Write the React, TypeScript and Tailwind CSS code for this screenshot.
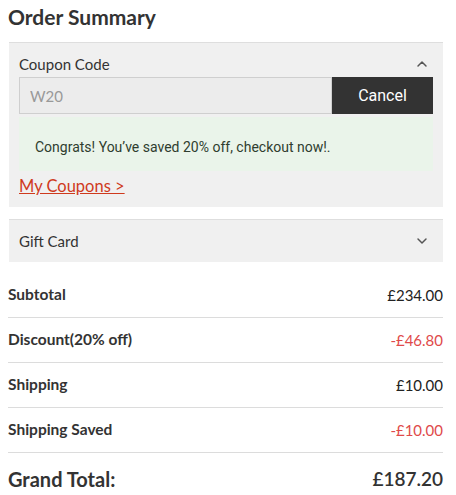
import { ChevronDown, ChevronUp } from "lucide-react";

const rows = [
  { label: "Subtotal", value: "£234.00", red: false },
  { label: "Discount(20% off)", value: "-£46.80", red: true },
  { label: "Shipping", value: "£10.00", red: false },
  { label: "Shipping Saved", value: "-£10.00", red: true },
];

export default function App() {
  return (
    <div className="w-[456px] bg-white px-2 font-['Lato','Noto_Sans',sans-serif] text-[#333]">
      <h2 className="pt-[3px] pb-[11px] text-[21px] leading-[28px] font-bold text-[#333]">
        Order Summary
      </h2>

      {/* Coupon */}
      <div className="mr-[5px] ml-[1px] border-t border-[#dedede] bg-[#f0f0f0] px-[10px] pb-[11px]">
        <div className="flex items-center justify-between pt-[11px] pr-[3px]">
          <span className="text-[15px] leading-[20px]">Coupon Code</span>
          <ChevronUp size={16} strokeWidth={2.2} className="text-[#555]" />
        </div>
        <div className="mt-[3px] flex h-[37px]">
          <input
            readOnly
            value="W20"
            className="h-full flex-1 border border-[#cfcfcf] bg-[#ececec] px-[10px] text-[15px] text-[#999] outline-none"
          />
          <button className="h-full w-[101px] bg-[#333] font-['Roboto',sans-serif] text-[16px] text-white">
            Cancel
          </button>
        </div>
        <div className="mt-[3px] h-[54px] bg-[#eaf4ea] pl-[16px] pt-[20px] font-['Roboto',sans-serif] text-[14px] leading-[20px] text-[#2f3d2f]">
          Congrats! You’ve saved 20% off, checkout now!.
        </div>
        <a className="mt-[5px] block text-[16.5px] leading-[20px] text-[#cf3a1d] underline">
          My Coupons &gt;
        </a>
      </div>

      {/* Gift card */}
      <div className="mt-[12px] mr-[5px] ml-[1px] flex h-[43px] items-center justify-between border-t border-[#dedede] bg-[#f0f0f0] px-[10px] pr-[13px]">
        <span className="text-[15px]">Gift Card</span>
        <ChevronDown size={16} strokeWidth={2.2} className="text-[#555]" />
      </div>

      {/* Totals */}
      <div className="mt-[11px] mr-[5px]">
        {rows.map((r) => (
          <div
            key={r.label}
            className="flex h-[45px] items-center justify-between border-b border-[#dcdcdc]"
          >
            <span className="text-[15.5px] font-bold text-[#333]">{r.label}</span>
            <span className={"text-[15px] " + (r.red ? "text-[#e04a4a]" : "text-[#222]")}>{r.value}</span>
          </div>
        ))}
        <div className="flex h-[54px] items-center justify-between pb-[2px] font-bold">
          <span className="text-[20px]">Grand Total:</span>
          <span className="text-[19px] font-semibold">£187.20</span>
        </div>
      </div>
    </div>
  );
}
